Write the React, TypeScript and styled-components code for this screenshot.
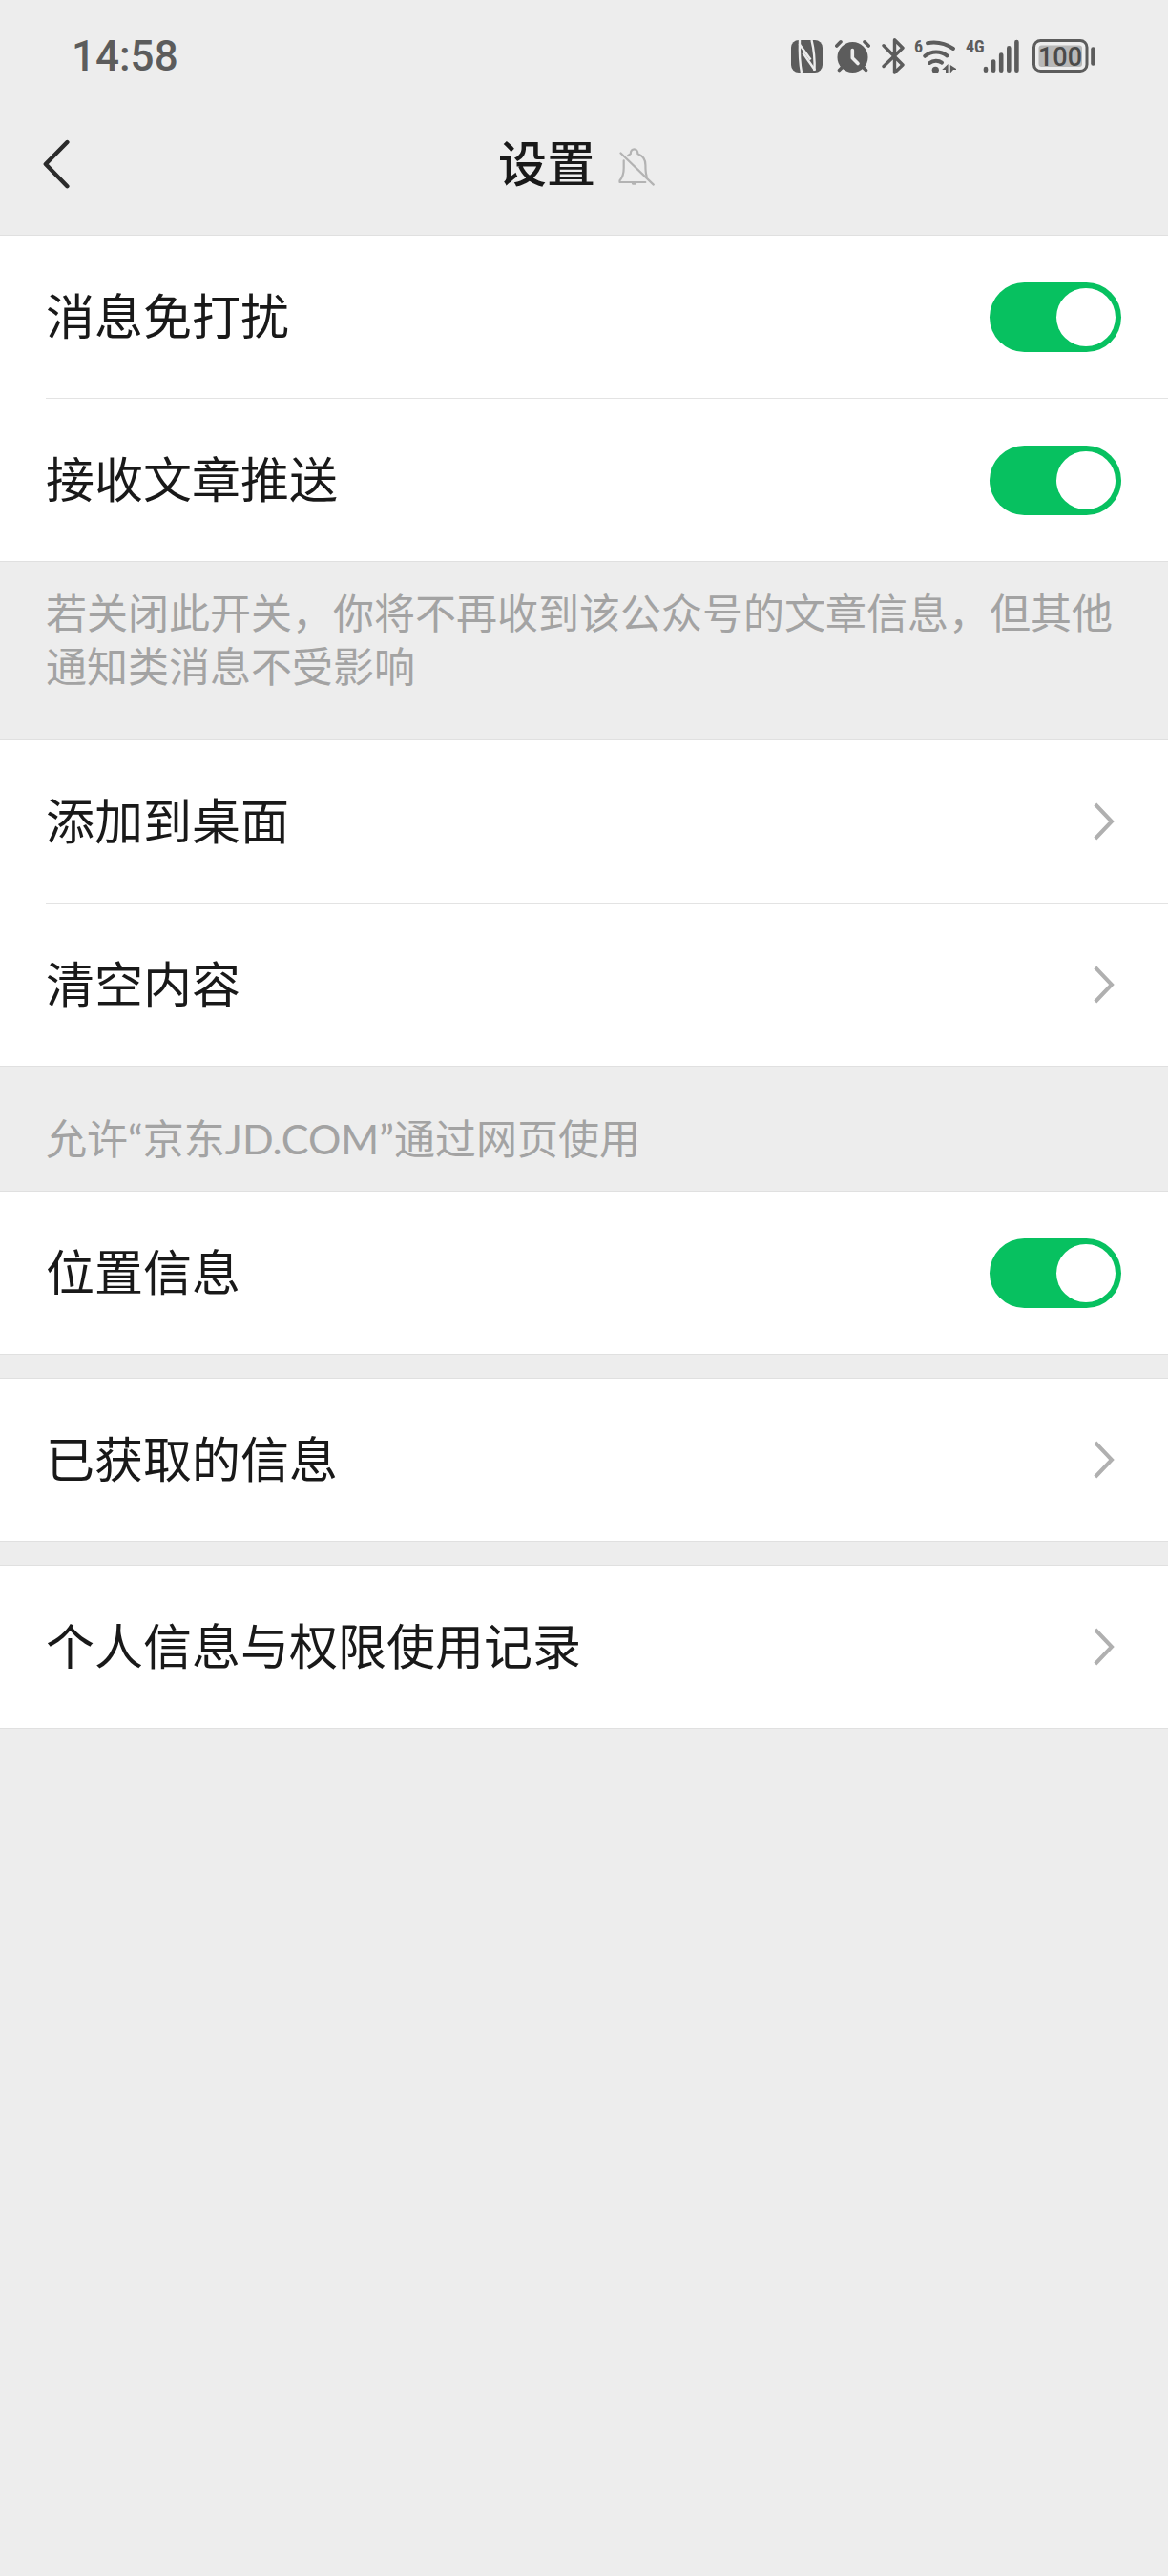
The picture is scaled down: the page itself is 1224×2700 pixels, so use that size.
import React, { useState } from "react";
import styled, { createGlobalStyle } from "styled-components";

const GlobalStyle = createGlobalStyle`
  *, *::before, *::after { box-sizing: border-box; }
  body {
    margin: 0;
    background: #ededed;
    color: #191919;
    font-family: "Noto Sans CJK SC", sans-serif;
  }
`;

const StatusBar = styled.div`
  display: flex;
  align-items: center;
  justify-content: space-between;
  height: 98px;
  padding: 20px 76px 0 75px;
  color: #5c5c5c;
`;

const Clock = styled.time`
  font: 500 44px/56px Roboto, sans-serif;
`;

const StatusIcons = styled.div`
  display: flex;
  align-items: center;
  gap: 10px;

  svg {
    display: block;
  }
`;

const NavBar = styled.header`
  display: grid;
  grid-template-columns: 1fr auto 1fr;
  align-items: center;
  height: 148px;
`;

const BackButton = styled.button`
  justify-self: start;
  margin-left: 24px;
  padding: 16px 20px;
  border: 0;
  background: none;
  cursor: pointer;

  svg {
    display: block;
  }
`;

const TitleGroup = styled.div`
  display: flex;
  align-items: center;
  gap: 24px;
  padding-right: 16px;

  svg {
    margin-top: 5px;
  }
`;

const Title = styled.h1`
  margin: 0;
  padding-bottom: 6px;
  font-size: 51px;
  line-height: 72px;
  font-weight: 500;
`;

const Group = styled.ul`
  margin: 0;
  padding: 0;
  list-style: none;
  background: #fff;
  border: solid #e0e0e0;
  border-width: 1px 0;

  & + & {
    margin-top: 24px;
  }
`;

const Item = styled.li`
  & + &::before {
    content: "";
    display: block;
    height: 1px;
    margin-left: 48px;
    background: #e3e3e3;
  }
`;

const rowLayout = `
  display: flex;
  align-items: center;
  justify-content: space-between;
  width: 100%;
  height: 170px;
  padding: 0 49px 0 48px;
  border: 0;
  background: none;
  color: inherit;
  font-family: inherit;
  font-size: 51px;
  line-height: 72px;
  text-align: left;
  cursor: pointer;
`;

const SwitchLabel = styled.label`
  ${rowLayout}
`;

const LinkButton = styled.button`
  ${rowLayout}

  svg {
    flex: none;
    margin-right: 7px;
  }
`;

const RowText = styled.span`
  padding-bottom: 6px;
`;

const Switch = styled.input`
  appearance: none;
  flex: none;
  width: 138px;
  height: 73px;
  margin: 0;
  padding: 6px;
  border-radius: 37px;
  background: #d9d9d9;
  cursor: pointer;

  &::after {
    content: "";
    display: block;
    width: 62px;
    height: 61px;
    border-radius: 50%;
    background: #fff;
  }

  &:checked {
    background: #07c160;
  }

  &:checked::after {
    margin-left: auto;
  }
`;

const Hint = styled.p`
  margin: 0;
  padding: 23px 48px 51px;
  color: #a3a3a3;
  font-size: 43px;
  line-height: 56px;
`;

const SectionTitle = styled.h2`
  margin: 0;
  padding: 48px 48px 26px;
  color: #a3a3a3;
  font-family: Lato, "Noto Sans CJK SC", sans-serif;
  font-size: 43px;
  line-height: 56px;
  font-weight: 400;
`;

const NfcIcon = () => (
  <svg width="33" height="40" viewBox="0 0 33 40" fill="none" aria-hidden="true">
    <rect y="3" width="33" height="34" rx="8" fill="#5c5c5c" />
    <g stroke="#ededed" strokeWidth="2.4">
      <path d="M9 3C8.6 15 9 27 11 37" />
      <path d="M8.5 7 20.5 23.5M21.5 3C24 13 25 23 24.5 35" />
      <path d="M12.5 16.5 25 34.5" />
    </g>
  </svg>
);

const AlarmIcon = () => (
  <svg width="40" height="40" viewBox="0 0 40 40" fill="none" stroke="#5c5c5c" strokeWidth="3.6" strokeLinecap="round" aria-hidden="true">
    <circle cx="21.5" cy="21" r="16" fill="#5c5c5c" stroke="none" />
    <path d="M4.8 9 9 4.8M34 4.8 38.2 9M7.5 34.5 12 30M35.5 34.5 31 30" />
    <path d="M21.3 13.5V21.7L27 27.5" stroke="#ededed" strokeLinejoin="round" />
  </svg>
);

const BluetoothIcon = () => (
  <svg width="26" height="40" viewBox="0 0 26 40" fill="none" stroke="#5c5c5c" strokeWidth="3.4" strokeLinecap="round" strokeLinejoin="round" aria-hidden="true">
    <path d="M4 8.8 24 29 15.5 37V2.8L24 11.2 4 30.5" />
  </svg>
);

const WifiIcon = () => (
  <svg width="44" height="40" viewBox="0 0 44 40" fill="none" aria-hidden="true">
    <text x="0" y="16" fill="#5c5c5c" fontFamily="'Roboto Condensed', Roboto, sans-serif" fontWeight="700" fontSize="18">6</text>
    <g stroke="#5c5c5c" strokeWidth="4" strokeLinecap="round">
      <path d="M14 6.2C23 4.6 33 6.6 41 12" />
      <path d="M11.2 19.8C18 14 28 14 34.4 19.4" />
      <path d="M16.2 27C20 24 25.5 24 29 26.6" />
    </g>
    <circle cx="22.3" cy="34.3" r="3.6" fill="#5c5c5c" />
    <path d="M29.2 34 35.6 28V37.5H33V34ZM37.8 29 44 33V34H41L37.8 37.5Z" fill="#5c5c5c" />
  </svg>
);

const SignalIcon = () => (
  <svg width="60" height="40" viewBox="0 0 60 40" fill="none" aria-hidden="true">
    <text x="0" y="16" fill="#5c5c5c" fontFamily="'Roboto Condensed', Roboto, sans-serif" fontWeight="700" fontSize="18">4G</text>
    <path d="M21 33V34.8M29.1 25.6V34.8M37.2 18.6V34.8M45.3 11.4V34.8M53.4 5V34.8" stroke="#5c5c5c" strokeWidth="4.6" strokeLinecap="round" />
  </svg>
);

const BatteryIcon = () => (
  <svg width="66" height="40" viewBox="0 0 66 40" fill="none" role="img" aria-label="100%">
    <rect x="1.5" y="3.5" width="55.5" height="32" rx="7" stroke="#5c5c5c" strokeWidth="3" />
    <rect x="6.5" y="8.5" width="45.5" height="22.5" rx="3" fill="#b8b8b8" />
    <text x="29" y="29.5" textAnchor="middle" fill="#4a4a4a" fontFamily="Roboto, sans-serif" fontWeight="500" fontSize="27">100</text>
    <path d="M63.5 12.5V27.5" stroke="#5c5c5c" strokeWidth="4.6" strokeLinecap="round" />
  </svg>
);

const BackIcon = () => (
  <svg width="30" height="52" viewBox="0 0 30 52" fill="none" stroke="#2b2b2b" strokeWidth="4.4" strokeLinecap="round" strokeLinejoin="round" aria-hidden="true">
    <path d="M26.4 3 3.8 26 26.4 49.2" />
  </svg>
);

const MutedBellIcon = () => (
  <svg width="38" height="42" viewBox="0 0 38 42" fill="none" stroke="#b3b3b3" strokeWidth="2.2" strokeLinecap="round" strokeLinejoin="round" role="img" aria-label="消息免打扰">
    <path d="M2.5 6.5 36.8 39.6" />
    <path d="M5.7 14.3V22C5.7 28 4.8 31.5 1.5 35.2V37H28.3" />
    <path d="M10 9.2 12.8 7.2C12.6 0.8 20.4 0.8 20.4 7.2C25.5 9 28.4 13.5 28.4 19C28.4 23.5 28.5 27 29.6 30.5" />
    <path d="M15 38.6H18" />
  </svg>
);

const Chevron = () => (
  <svg width="22" height="40" viewBox="0 0 22 40" fill="none" stroke="#b0b0b0" strokeWidth="4" aria-hidden="true">
    <path d="M1.8 2 19 20 1.8 38" />
  </svg>
);

const SwitchRow = ({ label }: { label: string }) => {
  const [on, setOn] = useState(true);
  return (
    <Item>
      <SwitchLabel>
        <RowText>{label}</RowText>
        <Switch type="checkbox" role="switch" checked={on} onChange={(e) => setOn(e.target.checked)} />
      </SwitchLabel>
    </Item>
  );
};

const LinkRow = ({ label }: { label: string }) => (
  <Item>
    <LinkButton type="button">
      <RowText>{label}</RowText>
      <Chevron />
    </LinkButton>
  </Item>
);

export default function App() {
  return (
    <>
      <GlobalStyle />
      <StatusBar>
        <Clock>14:58</Clock>
        <StatusIcons>
          <NfcIcon />
          <AlarmIcon />
          <BluetoothIcon />
          <WifiIcon />
          <SignalIcon />
          <BatteryIcon />
        </StatusIcons>
      </StatusBar>
      <NavBar>
        <BackButton type="button" aria-label="返回">
          <BackIcon />
        </BackButton>
        <TitleGroup>
          <Title>设置</Title>
          <MutedBellIcon />
        </TitleGroup>
      </NavBar>
      <main>
        <Group>
          <SwitchRow label="消息免打扰" />
          <SwitchRow label="接收文章推送" />
        </Group>
        <Hint>若关闭此开关，你将不再收到该公众号的文章信息，但其他通知类消息不受影响</Hint>
        <Group>
          <LinkRow label="添加到桌面" />
          <LinkRow label="清空内容" />
        </Group>
        <SectionTitle>允许“京东JD.COM”通过网页使用</SectionTitle>
        <Group>
          <SwitchRow label="位置信息" />
        </Group>
        <Group>
          <LinkRow label="已获取的信息" />
        </Group>
        <Group>
          <LinkRow label="个人信息与权限使用记录" />
        </Group>
      </main>
    </>
  );
}
